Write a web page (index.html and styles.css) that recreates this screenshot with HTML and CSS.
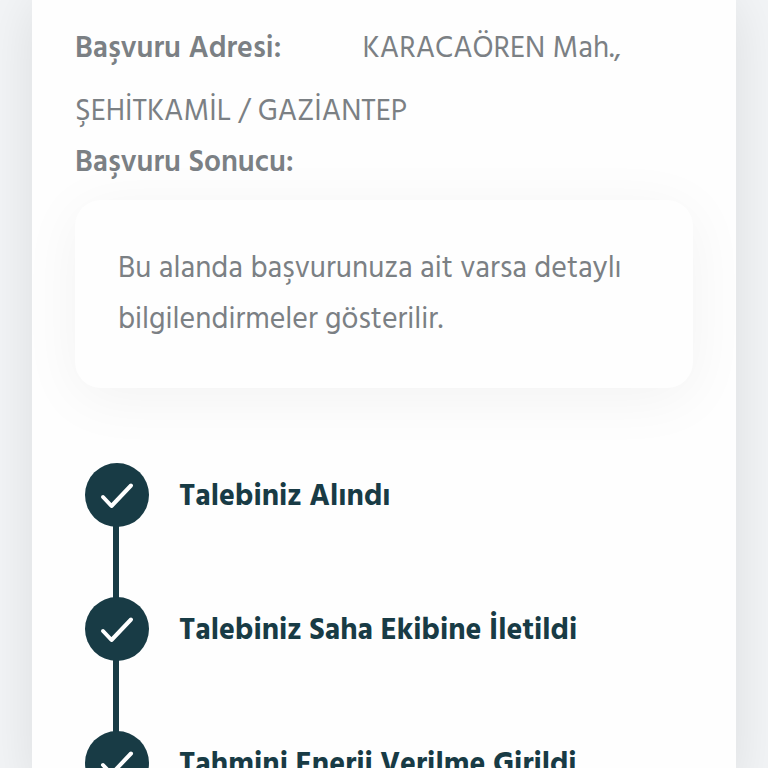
FILE: index.html
```html
<!DOCTYPE html>
<html lang="tr">
  <head>
    <meta charset="utf-8" />
    <meta name="viewport" content="width=device-width, initial-scale=1" />
    <title>Başvuru Sonucu</title>
    <link rel="stylesheet" href="styles.css" />
  </head>
  <body>
    <main class="card">
      <p class="address">
        <strong class="address-label">Başvuru Adresi:</strong>KARACAÖREN Mah.,
        <span class="district">ŞEHİTKAMİL / GAZİANTEP</span>
      </p>
      <h2 class="result-title">Başvuru Sonucu:</h2>
      <div class="result-box">
        <p>Bu alanda başvurunuza ait varsa detaylı bilgilendirmeler gösterilir.</p>
      </div>

      <ol class="steps">
        <li class="step">
          <span class="step-icon">
            <svg viewBox="0 0 64 64" aria-hidden="true">
              <path d="M18 34L26.500 43L46 22.500" />
            </svg>
          </span>
          <span class="step-label">Talebiniz Alındı</span>
        </li>
        <li class="step">
          <span class="step-icon">
            <svg viewBox="0 0 64 64" aria-hidden="true">
              <path d="M18 34L26.500 43L46 22.500" />
            </svg>
          </span>
          <span class="step-label">Talebiniz Saha Ekibine İletildi</span>
        </li>
        <li class="step">
          <span class="step-icon">
            <svg viewBox="0 0 64 64" aria-hidden="true">
              <path d="M18 34L26.500 43L46 22.500" />
            </svg>
          </span>
          <span class="step-label">Tahmini Enerji Verilme Girildi</span>
        </li>
      </ol>
    </main>
  </body>
</html>
```
FILE: styles.css
```css
* {
  box-sizing: border-box;
}
body {
  margin: 0;
  height: 100vh;
  overflow: hidden;
  padding: 0 32px;
  background-color: #f3f5f7;
  font-family: Hind, "Noto Sans", "Open Sans", sans-serif;
  font-size: 30px;
  color: #7b8084;
}
.card {
  min-height: 100vh;
  padding: 18px 43px 0;
  background-color: #fefefe;
  box-shadow: 0 0 56px rgba(0, 0, 0, 0.1);
}
.address {
  margin: 0;
  line-height: 63px;
}
.address-label {
  display: inline-block;
  margin-right: 81px;
  font-weight: 600;
}
.district {
  display: inline-block;
}
.result-title {
  margin: 0 0 18px;
  font-size: 30px;
  font-weight: 600;
  line-height: 38px;
}
.result-box {
  padding: 44px 43px 42px;
  border-radius: 26px;
  background-color: #fefefe;
  box-shadow: 0 10px 60px rgba(0, 0, 0, 0.05);
}
.result-box p {
  margin: 0;
  line-height: 51px;
}
.steps {
  margin: 75px 0 0;
  padding: 0 0 0 10px;
  list-style: none;
}
.step {
  position: relative;
  display: flex;
  align-items: center;
  gap: 30px;
  margin-bottom: 70px;
  color: #183b45;
}
/* line down to the next step */
.step:not(:last-child)::after {
  content: "";
  position: absolute;
  top: 63px;
  left: 28px;
  width: 6px;
  height: 72px;
  background-color: #183b45;
}
.step-icon {
  flex: none;
  width: 64px;
  height: 64px;
  border-radius: 50%;
  background-color: #183b45;
}
.step-icon svg {
  display: block;
  width: 100%;
  fill: none;
  stroke: #fff;
  stroke-width: 4;
  stroke-linecap: round;
  stroke-linejoin: round;
}
.step-label {
  padding-top: 4px;
  font-weight: 700;
}
```
